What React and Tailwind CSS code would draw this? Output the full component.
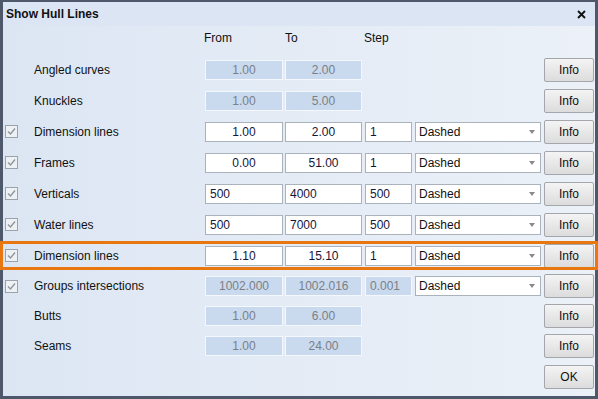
import React from "react";

const font = { fontFamily: '"Liberation Sans", Arial, sans-serif' };

function Check() {
  return (
    <div className="w-[13px] h-[13px] border border-[#9aa3ad] bg-[#eef1f4] flex items-center justify-center">
      <svg width="9" height="9" viewBox="0 0 9 9">
        <path d="M1 4.5 L3.5 7 L8 1.5" stroke="#8f959c" strokeWidth="1.4" fill="none" />
      </svg>
    </div>
  );
}

function Field({ value, w, align = "center", disabled }) {
  return (
    <div
      className={`h-[20px] flex items-center border text-[12px] ${
        disabled
          ? "bg-[#c9d9ee] border-[#f4f7fb] text-[#7b7f86]"
          : "bg-white border-[#aab2bb] text-[#15153a]"
      } ${align === "center" ? "justify-center" : "justify-start pl-[4px]"}`}
      style={{ width: w }}
    >
      {value}
    </div>
  );
}

function Select() {
  return (
    <div className="w-[126px] h-[20px] bg-white border border-[#aab2bb] flex items-center justify-between pl-[3px] pr-[5px] text-[12px] text-[#111]">
      <span>Dashed</span>
      <svg width="6" height="4" viewBox="0 0 6 4">
        <path d="M0 0 L6 0 L3 4 Z" fill="#8a8a8a" />
      </svg>
    </div>
  );
}

function Btn({ children }) {
  return (
    <div className="w-[50px] h-[24px] rounded-[2px] border border-[#a3a6aa] bg-gradient-to-b from-[#f4f4f4] to-[#dcdcdc] flex items-center justify-center text-[12px] text-[#111]">
      {children}
    </div>
  );
}

function Row({ h, check, label, from, to, step, select, disabled, stepDisabled }) {
  return (
    <div className="flex items-center" style={{ height: h }}>
      <div className="w-[202px] flex items-center">
        <div className="w-[13px] ml-[2px]">{check ? <Check /> : null}</div>
        <span className="ml-[16px] text-[12px] text-[#111]">{label}</span>
      </div>
      {from !== undefined ? (
        <div className="flex items-center">
          <Field value={from} w={78} disabled={disabled} />
          <div className="w-[2px]" />
          <Field value={to} w={77} disabled={disabled} />
          <div className="w-[3px]" />
          {step !== undefined ? (
            <Field value={step} w={47} align="left" disabled={stepDisabled ?? disabled} />
          ) : (
            <div className="w-[47px]" />
          )}
          <div className="w-[3px]" />
          {select ? <Select /> : <div className="w-[126px]" />}
          <div className="w-[3px]" />
        </div>
      ) : (
        <div className="w-[339px]" />
      )}
      <Btn>{label ? "Info" : "OK"}</Btn>
    </div>
  );
}

export default function App() {
  return (
    <div className="relative w-[598px] h-[399px] overflow-hidden" style={font}>
      <div className="w-[598px] h-[399px] border-t-[2px] border-l-[3px] border-r-[3px] border-b-[3px] border-[#4d586a] bg-gradient-to-r from-[#dce6f3] to-[#ecf1f8] flex flex-col">
        <div className="h-[24px] bg-[#dbe5f3] flex items-center justify-between pl-[3px] pr-[9px]">
          <span className="text-[12px] font-bold text-[#111]">Show Hull Lines</span>
          <svg width="9" height="9" viewBox="0 0 9 9">
            <path d="M1 1 L8 8 M8 1 L1 8" stroke="#111" strokeWidth="1.8" />
          </svg>
        </div>
        <div className="h-[24px] flex items-center text-[12px] text-[#111]">
          <span className="ml-[201px] w-[81px]">From</span>
          <span className="w-[79px]">To</span>
          <span>Step</span>
        </div>
        <div className="h-[4px]" />
        <Row h={31} label="Angled curves" from="1.00" to="2.00" disabled />
        <Row h={31} label="Knuckles" from="1.00" to="5.00" disabled />
        <Row h={31} check label="Dimension lines" from="1.00" to="2.00" step="1" select />
        <Row h={31} check label="Frames" from="0.00" to="51.00" step="1" select />
        <Row h={31} check label="Verticals" from={<span className="w-full pl-[4px]">500</span>} to={<span className="w-full pl-[4px]">4000</span>} step="500" select />
        <Row h={31} check label="Water lines" from={<span className="w-full pl-[4px]">500</span>} to={<span className="w-full pl-[4px]">7000</span>} step="500" select />
        <Row h={31} check label="Dimension lines" from="1.10" to="15.10" step="1" select />
        <Row h={30} check label="Groups intersections" from="1002.000" to="1002.016" step="0.001" select disabled />
        <Row h={30} label="Butts" from="1.00" to="6.00" disabled />
        <Row h={30} label="Seams" from="1.00" to="24.00" disabled />
        <Row h={31} label="" />
      </div>
      <div className="absolute left-0 top-[241px] w-[598px] h-[29px] border-[3px] border-[#e8770f] pointer-events-none" />
    </div>
  );
}
